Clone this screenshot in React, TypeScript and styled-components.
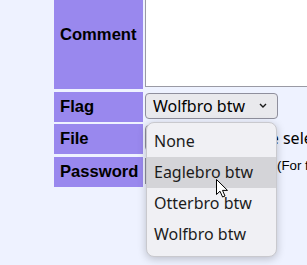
import React, { FC } from 'react';
import styled, { createGlobalStyle } from 'styled-components';

const GlobalStyle = createGlobalStyle`
  html, body {
    margin: 0;
    padding: 0;
    background: #eef2ff;
    overflow: hidden;
  }
  body {
    width: 307px;
    height: 265px;
  }
`;

const Page = styled.div`
  position: relative;
  width: 307px;
  height: 265px;
  overflow: hidden;
`;

const Form = styled.div`
  display: grid;
  grid-template-columns: 89px 400px;
  grid-template-rows: 109px 30px 30px 30px;
  column-gap: 1px;
  row-gap: 2.5px;
  margin: -20px 0 0 54px;
`;

const Label = styled.div`
  display: flex;
  align-items: center;
  padding: 0 6px;
  background: #98e;
  color: #000;
  font-family: 'Liberation Sans', Arial, sans-serif;
  font-weight: 700;
  font-size: 16.6px;
`;

const Field = styled.div`
  position: relative;
  display: flex;
  align-items: flex-start;
  padding: 1px;
  font-family: 'Noto Sans', sans-serif;
  font-size: 16px;
  color: #000;
`;

const TextArea = styled.div`
  box-sizing: border-box;
  width: 365px;
  height: 106px;
  background: #fff;
  border: 1px solid #9a9aa4;
`;

const SelectBox = styled.div`
  box-sizing: border-box;
  position: relative;
  display: flex;
  align-items: center;
  justify-content: space-between;
  width: 133px;
  height: 26px;
  padding: 0 10px 0 7px;
  background: #e9e9ed;
  border: 1px solid #8f8f9d;
  border-radius: 4px;
  font-size: 16px;
  line-height: 1;
`;

const Menu = styled.div`
  box-sizing: border-box;
  position: absolute;
  top: 28px;
  left: 0;
  width: 131px;
  padding: 3px 0 6px;
  background: #f0f0f4;
  border: 1px solid #c9c9ce;
  border-radius: 8px;
  box-shadow: 0 2px 8px rgba(0, 0, 0, 0.22);
  z-index: 2;
`;

const Option = styled.div<{ active?: boolean }>`
  display: flex;
  align-items: center;
  height: 31px;
  padding-left: 7px;
  background: ${p => (p.active ? '#d4d4d8' : 'transparent')};
  color: #1c1c1c;
  font-size: 16px;
`;

const FileRow = styled.div`
  display: flex;
  align-items: center;
  gap: 6px;
  height: 26px;
  white-space: nowrap;
`;

const FileButton = styled.div`
  box-sizing: border-box;
  width: 79px;
  height: 26px;
  background: #e9e9ed;
  border: 1px solid #8f8f9d;
  border-radius: 4px;
`;

const Password = styled.div`
  box-sizing: border-box;
  width: 128px;
  height: 26px;
  background: #fff;
  border: 1px solid #8f8f9d;
`;

const Note = styled.span`
  margin-left: 4px;
  font-family: 'Liberation Sans', Arial, sans-serif;
  font-size: 13.3px;
  white-space: nowrap;
`;

const Cursor = styled.svg`
  position: absolute;
  left: 216px;
  top: 179px;
  z-index: 3;
`;

const flags = ['None', 'Eaglebro btw', 'Otterbro btw', 'Wolfbro btw'];

const App: FC = () => (
  <Page>
    <GlobalStyle />
    <Form>
      <Label>Comment</Label>
      <Field>
        <TextArea />
      </Field>

      <Label>Flag</Label>
      <Field>
        <SelectBox>
          <span>Wolfbro btw</span>
          <svg width="8" height="5" viewBox="0 0 8 5">
            <path d="M1 1l3 3 3-3" fill="none" stroke="#1a1a1a" strokeWidth="1.4" />
          </svg>
          <Menu>
            {flags.map(f => (
              <Option key={f} active={f === 'Eaglebro btw'}>
                {f}
              </Option>
            ))}
          </Menu>
        </SelectBox>
      </Field>

      <Label>File</Label>
      <Field>
        <FileRow>
          <FileButton />
          <span>No file selected.</span>
        </FileRow>
      </Field>

      <Label>Password</Label>
      <Field>
        <Password />
        <Note>(For file deletion.)</Note>
      </Field>
    </Form>
    <Cursor width="13" height="19" viewBox="0 0 13 19">
      <path
        d="M0.5 0.5 L0.5 15.5 L4 12.2 L6.6 18 L9 17 L6.5 11.4 L11.5 11.4 Z"
        fill="#fff"
        stroke="#000"
        strokeWidth="1"
        strokeLinejoin="round"
      />
    </Cursor>
  </Page>
);

export default App;
